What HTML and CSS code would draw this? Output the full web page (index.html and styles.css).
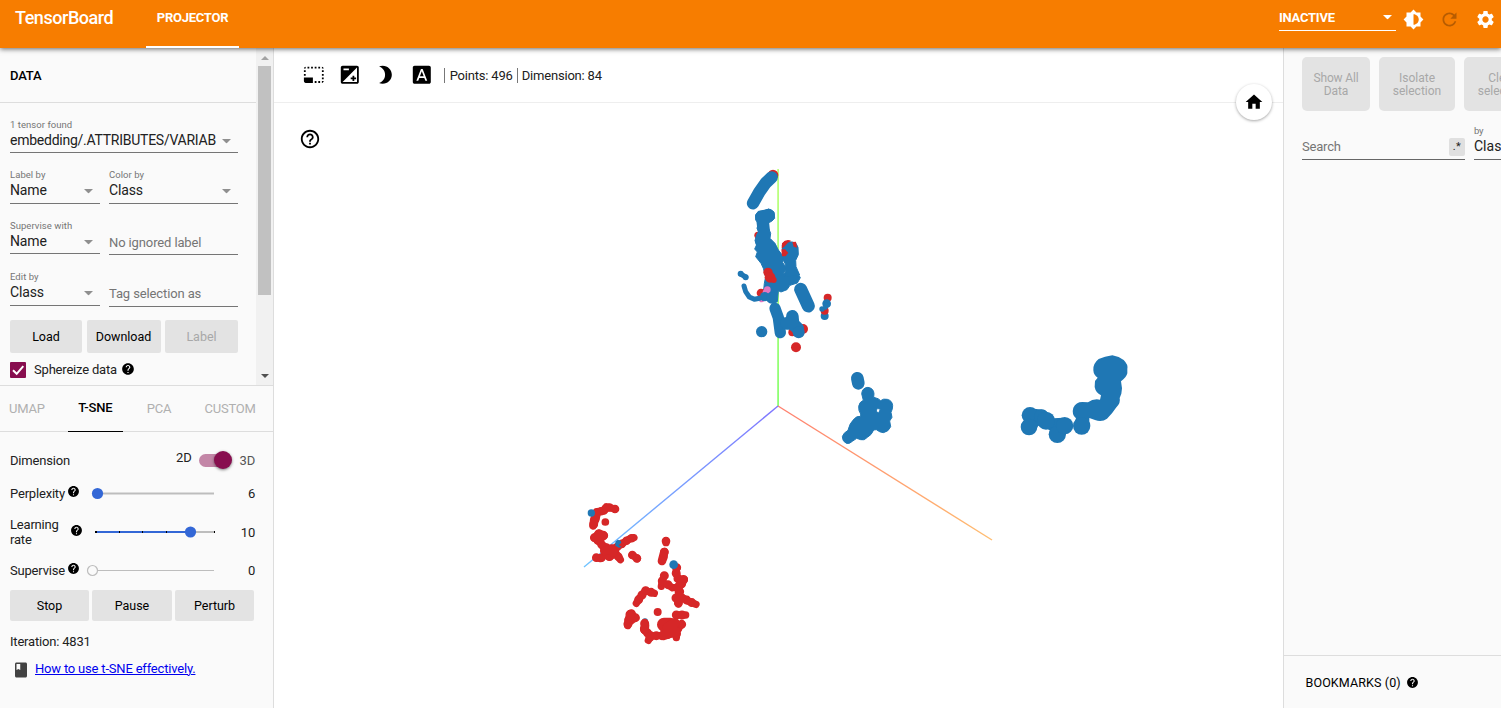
FILE: index.html
```html
<!DOCTYPE html>
<html lang="en">
<head>
<meta charset="utf-8">
<title>TensorBoard</title>
<link rel="stylesheet" href="styles.css">
</head>
<body>
<svg class="defs" width="0" height="0">
  <symbol id="help" viewBox="0 0 24 24"><path d="M12 2C6.48 2 2 6.48 2 12s4.48 10 10 10 10-4.48 10-10S17.52 2 12 2zm1 17h-2v-2h2v2zm2.07-7.75l-.9.92C13.45 12.9 13 13.5 13 15h-2v-.5c0-1.1.45-2.1 1.17-2.83l1.24-1.26c.37-.36.59-.86.59-1.41 0-1.1-.9-2-2-2s-2 .9-2 2H8c0-2.21 1.79-4 4-4s4 1.79 4 4c0 .88-.36 1.68-.93 2.25z"/></symbol>
  <symbol id="caret" viewBox="0 0 10 5"><path d="M0 0h10L5 5z"/></symbol>
</svg>
<div class="app">
  <header class="topbar">
    <div class="brand">TensorBoard</div>
    <div class="tab-main">PROJECTOR</div>
    <div class="spacer"></div>
    <div class="inactive"><span>INACTIVE</span><svg class="caret"><use href="#caret"/></svg></div>
    <svg class="hicon" viewBox="0 0 24 24"><path d="M20 15.31L23.31 12 20 8.69V4h-4.69L12 .69 8.69 4H4v4.69L.69 12 4 15.31V20h4.69L12 23.31 15.31 20H20v-4.69zM12 18V6c3.31 0 6 2.69 6 6s-2.69 6-6 6z"/></svg>
    <svg class="hicon dim" viewBox="0 0 24 24"><path d="M17.65 6.35C16.2 4.9 14.21 4 12 4c-4.42 0-7.99 3.58-7.99 8s3.57 8 7.99 8c3.73 0 6.84-2.55 7.73-6h-2.08c-.82 2.33-3.04 4-5.65 4-3.31 0-6-2.69-6-6s2.69-6 6-6c1.66 0 3.14.69 4.22 1.78L13 11h7V4l-2.35 2.35z"/></svg>
    <svg class="hicon" viewBox="0 0 24 24"><path d="M19.14 12.94c.04-.3.06-.61.06-.94 0-.32-.02-.64-.07-.94l2.03-1.58c.18-.14.23-.41.12-.61l-1.92-3.32c-.12-.22-.37-.29-.59-.22l-2.39.96c-.5-.38-1.03-.7-1.62-.94l-.36-2.54c-.04-.24-.24-.41-.48-.41h-3.84c-.24 0-.43.17-.47.41l-.36 2.54c-.59.24-1.13.57-1.62.94l-2.39-.96c-.22-.08-.47 0-.59.22L2.74 8.87c-.12.21-.08.47.12.61l2.03 1.58c-.05.3-.09.63-.09.94s.02.64.07.94l-2.03 1.58c-.18.14-.23.41-.12.61l1.92 3.32c.12.22.37.29.59.22l2.39-.96c.5.38 1.03.7 1.62.94l.36 2.54c.05.24.24.41.48.41h3.84c.24 0 .44-.17.47-.41l.36-2.54c.59-.24 1.13-.56 1.62-.94l2.39.96c.22.08.47 0 .59-.22l1.92-3.32c.12-.22.07-.47-.12-.61l-2.01-1.58zM12 15.6c-1.98 0-3.6-1.62-3.6-3.6s1.62-3.6 3.6-3.6 3.6 1.62 3.6 3.6-1.62 3.6-3.6 3.6z"/></svg>
  </header>
  <div class="main">
    <aside class="left">
      <section class="data">
        <div class="data-body">
          <h2 class="title">DATA</h2>
          <div class="fields">
            <div class="field wide"><label>1 tensor found</label><div class="value path">embedding/.ATTRIBUTES/VARIAB<svg class="caret"><use href="#caret"/></svg></div></div>
            <div class="field tall"><label>Label by</label><div class="value">Name<svg class="caret"><use href="#caret"/></svg></div></div>
            <div class="field tall"><label>Color by</label><div class="value">Class<svg class="caret"><use href="#caret"/></svg></div></div>
            <div class="field"><label>Supervise with</label><div class="value">Name<svg class="caret"><use href="#caret"/></svg></div></div>
            <div class="field tall"><div class="hint">No ignored label</div></div>
            <div class="field tall"><label>Edit by</label><div class="value">Class<svg class="caret"><use href="#caret"/></svg></div></div>
            <div class="field taller"><div class="hint">Tag selection as</div></div>
          </div>
          <div class="buttons data-buttons"><div class="btn">Load</div><div class="btn">Download</div><div class="btn off">Label</div></div>
          <div class="sphere"><svg class="check" viewBox="0 0 16 16"><path d="M3 8.2l3.7 3.6 6.6-7.6"/></svg><span>Sphereize data</span><svg class="help"><use href="#help"/></svg></div>
        </div>
        <div class="scroll"><svg class="arrow up" viewBox="0 0 8 4"><path d="M0 4h8L4 0z"/></svg><div class="thumb"></div><svg class="arrow down" viewBox="0 0 8 4"><path d="M0 0h8L4 4z"/></svg></div>
      </section>
      <nav class="tabs"><span>UMAP</span><span class="on">T-SNE</span><span>PCA</span><span>CUSTOM</span></nav>
      <section class="tsne">
        <div class="row dimension"><span>Dimension</span><div class="spacer"></div><span class="two">2D</span><div class="toggle"></div><span class="three">3D</span></div>
        <div class="row perp"><span>Perplexity</span><svg class="help"><use href="#help"/></svg>
          <svg class="slider" viewBox="0 0 130 14"><path d="M6 7.5h118" stroke="#bdbdbd" stroke-width="2"/><circle cx="7.5" cy="7.5" r="5.6" fill="#3367d6"/></svg><span class="num">6</span></div>
        <div class="row learn"><span class="two-line">Learning<br>rate</span><svg class="help"><use href="#help"/></svg>
          <svg class="slider" viewBox="0 0 130 14"><path d="M5 7h120" stroke="#bdbdbd" stroke-width="2"/><path d="M5 7h96" stroke="#3367d6" stroke-width="2"/><path d="M5 7h2m22 0h1m22 0h1m23 0h1m47 0h1" stroke="#000" stroke-width="2"/><circle cx="100.5" cy="7" r="5.6" fill="#3367d6"/></svg><span class="num">10</span></div>
        <div class="row sup"><span>Supervise</span><svg class="help"><use href="#help"/></svg>
          <svg class="slider" viewBox="0 0 130 14"><path d="M8 7.5h116" stroke="#bdbdbd"/><circle cx="2.5" cy="7.5" r="5" fill="#fafafa" stroke="#bdbdbd" stroke-width="1.2"/></svg><span class="num">0</span></div>
        <div class="buttons run-buttons"><div class="btn">Stop</div><div class="btn">Pause</div><div class="btn">Perturb</div></div>
        <div class="iter">Iteration: 4831</div>
        <div class="howto"><svg viewBox="0 0 24 24"><path d="M18 2H6c-1.1 0-2 .9-2 2v16c0 1.1.9 2 2 2h12c1.1 0 2-.9 2-2V4c0-1.1-.9-2-2-2zM6 4h5v8l-2.5-1.5L6 12V4z"/></svg><a href="#">How to use t-SNE effectively.</a></div>
      </section>
    </aside>
    <main class="stage">
      <div class="tools">
        <svg viewBox="0 0 24 24"><path d="M23 15h-2v2h2v-2zm0-4h-2v2h2v-2zm0 8h-2v2c1 0 2-1 2-2zM15 3h-2v2h2V3zm8 4h-2v2h2V7zm-2-4v2h2c0-1-1-2-2-2zM3 21h8v-6H1v4c0 1.1.9 2 2 2zM3 7H1v2h2V7zm12 12h-2v2h2v-2zm4-16h-2v2h2V3zm0 16h-2v2h2v-2zM3 3C2 3 1 4 1 5h2V3zm0 8H1v2h2v-2zm8-8H9v2h2V3zM7 3H5v2h2V3z"/></svg>
        <svg viewBox="0 0 24 24"><path d="M15 17v2h2v-2h2v-2h-2v-2h-2v2h-2v2h2zm5-15H4c-1.1 0-2 .9-2 2v16c0 1.1.9 2 2 2h16c1.1 0 2-.9 2-2V4c0-1.1-.9-2-2-2zM5 5h6v2H5V5zm15 15H4L20 4v16z"/></svg>
        <svg viewBox="0 0 24 24"><path d="M8.5 2C7 2 5.700 2.300 4.500 2.800C8.700 4.300 11.200 7.700 11.200 12S8.700 19.700 4.500 21.200C5.700 21.700 7 22 8.500 22C14.300 22 18.700 17.500 18.700 12S14.300 2 8.500 2z"/></svg>
        <svg viewBox="0 0 24 24"><path d="M9.93 13.5h4.14L12 7.98zM20 2H4c-1.1 0-2 .9-2 2v16c0 1.1.9 2 2 2h16c1.1 0 2-.9 2-2V4c0-1.1-.9-2-2-2zm-4.05 16.5l-1.14-3H9.17l-1.12 3H5.96l5.11-13h1.86l5.11 13h-2.09z"/></svg>
        <span class="stat">Points: 496</span><span class="stat">Dimension: 84</span>
      </div>
      <svg class="plot" viewBox="274 103 1009 605">
        <defs>
          <linearGradient id="gy" x1="0" y1="0" x2="0" y2="1"><stop offset="0" stop-color="#c0ff80"/><stop offset="1" stop-color="#8bff73"/></linearGradient>
          <linearGradient id="gx" gradientUnits="userSpaceOnUse" x1="778" y1="406" x2="992" y2="540"><stop offset="0" stop-color="#ff7f6e"/><stop offset="1" stop-color="#ffbd70"/></linearGradient>
          <linearGradient id="gz" gradientUnits="userSpaceOnUse" x1="778" y1="406" x2="584" y2="567"><stop offset="0" stop-color="#8075ff"/><stop offset="1" stop-color="#70c4ff"/></linearGradient>
          <path id="trail-a" d="M120 57L94 50L88 63L65 65L60 90L54 108M58 143L73 129L88 137L65 148L82 166L102 177L122 174L150 155L165 146L177 143M64 203L77 206L100 182L102 201L123 190L136 209M118 190L94 190L82 166M172 195L187 206M273 153V158M268 186L267 197L261 213"/>
          <path id="trail-b" d="M305 233L303 248L309 266L328 269L313 292L292 293M310 290L313 310M268 257L262 272L259 289M279 284L292 293M303 324H325L341 334L363 343M314 305L310 342M212 302L238 310M212 302L196 321L184 340M169 371L182 384L160 394L158 407M165 373L160 394M209 400L208 421L227 437L220 451M227 437H265L299 428M304 375H332M320 403L305 420L304 443"/>
        </defs>
        <rect x="777.2" y="169" width="1.8" height="237" fill="url(#gy)"/>
        <path d="M778 406L992 540" stroke="url(#gx)" stroke-width="1.4"/>
        <path d="M778 406L584 567" stroke="url(#gz)" stroke-width="1.4"/>
        <!-- upper cluster -->
        <g transform="translate(725 160) scale(.33333)">
          <g class="r"><circle cx="144" cy="45" r="16"/><circle cx="99" cy="226" r="11"/></g>
          <path class="bl" stroke-width="37" d="M140 52L122 69L103 96L84 130"/>
          <path class="bl" stroke-width="37" d="M109 170L131 165M113 185L116 210M112 229L109 245L118 268L132 288"/>
          <g class="b grown">
            <path d="M92 165L100 154L118 152L131 147L147 156L149 175L140 184L131 188L131 205L137 220L135 235L150 250L160 270L168 280L178 292L172 306L184 324L176 340L215 335L226 353L217 369L195 376L186 389L168 396L160 392L157 425L145 432L130 420L116 390L118 370L122 350L115 325L108 310L92 290L97 276L89 267L95 254L90 242L94 228L101 215L96 205L100 190L92 180z"/>
            <path d="M172 256L177 246L202 246L213 250L219 262L220 284L212 301L213 320L224 345L180 350L181 312L174 300z"/>
          </g>
          <g class="r"><path d="M170 266L171 250Q184 235 199 243Q188 246 180 258zM202 246L213 245L216 263L206 260zM169 268H180L190 278L182 289L171 289z"/><circle cx="129" cy="337" r="14"/><circle cx="135" cy="352" r="16"/><circle cx="146" cy="360" r="9"/><circle cx="108" cy="399" r="13"/></g>
          <g class="p"><circle cx="127" cy="389" r="10"/><circle cx="122" cy="397" r="9"/><circle cx="110" cy="419" r="8"/></g>
          <g class="b"><circle cx="119" cy="410" r="14"/><circle cx="140" cy="414" r="17"/><circle cx="110" cy="515" r="17"/></g>
          <path class="bl" stroke-width="15" d="M47 342L62 351"/><circle class="b" cx="47" cy="341" r="9"/><circle class="b" cx="62" cy="352" r="9"/>
          <path class="bl" stroke-width="15" d="M57 378L62 395L73 411L88 418L104 415"/>
          <path class="bl" stroke-width="39" d="M227 388L238 412L250 438"/>
          <path class="bl" stroke-width="34" d="M150 445L160 473L166 518M168 490H195"/>
          <g class="r"><circle cx="234" cy="507" r="15"/><circle cx="202" cy="517" r="12"/><circle cx="213" cy="562" r="15"/></g>
          <path class="bl" stroke-width="38" d="M202 469L204 492L218 505M185 490H205"/>
          <circle class="b" cx="221" cy="517" r="18"/>
          <circle class="b" cx="299" cy="468" r="12"/><circle class="r" cx="299" cy="452" r="12"/><circle class="b" cx="291" cy="447" r="8"/><circle class="r" cx="308" cy="413" r="12"/><circle class="b" cx="305" cy="431" r="13"/>
          <path class="bl" stroke-width="14" d="M304 434L301 442"/>
        </g>
        <!-- lower left clusters -->
        <g transform="translate(575 490) scale(.33333)">
          <circle class="b" cx="210" cy="394" r="9"/>
          <use href="#trail-a" class="rl" stroke-width="22"/><use href="#trail-a" class="rl beads" stroke-width="26"/>
          <use href="#trail-b" class="rl" stroke-width="22"/><use href="#trail-b" class="rl beads" stroke-width="27"/>
          <path class="rl" stroke-width="26" d="M60 143L75 134L86 137L68 150M88 183L110 178L115 188M58 88L56 104M65 70L60 90M166 374L160 400M210 405L209 420M268 186L261 213"/>
          <path class="rl" stroke-width="42" d="M267 404L286 404L276 417"/><path class="rl" stroke-width="28" d="M277 412L300 398M265 437L303 424"/>
          <g class="r"><circle cx="248" cy="366" r="12"/><circle cx="91" cy="96" r="11.5"/></g>
          <g class="b"><circle cx="49" cy="69" r="11"/><circle cx="296" cy="224" r="13"/><path d="M121 155L128 149L137 152L139 158L131 166L140 171L131 173L121 167z"/></g>
        </g>
        <!-- middle cluster -->
        <g class="b" transform="translate(830 360) scale(.33333)">
          <path class="bl" stroke-width="38" d="M82 55L85 70"/>
          <path class="grown" fill-rule="evenodd" d="M95 101Q97 83 114 82Q131 85 132 101L131 112L144 116L152 122Q160 115 172 118Q187 122 188 137Q188 148 183 157L186 172L179 183L182 200Q176 215 160 218Q149 217 139 209L131 210Q125 225 112 232Q103 243 92 239L80 235L67 244Q58 253 49 250Q37 244 37 230Q40 219 54 211Q58 190 73 176Q80 168 92 169L92 162Q85 153 86 139Q88 126 100 121zM142 145L138 154L146 159L151 148z"/>
        </g>
        <!-- right cluster -->
        <g class="b" transform="translate(1010 345) scale(.33333)">
          <path d="M250 76Q248 56 266 42Q284 35 307 31Q328 35 341 45Q355 59 352 72V85Q349 98 333 109L336 130L334 146L329 159Q333 174 318 188L306 205L291 221Q276 232 255 225L238 219V245L192 238L198 220Q184 208 190 188Q198 171 217 171L234 172Q250 160 270 164L273 151Q257 143 254 126L255 108L263 98Q251 91 250 76z"/>
          <path d="M60 190L105 195L130 220L160 218L164 266L130 262L108 250L85 242L75 258L45 226z"/>
          <circle cx="60" cy="211" r="25"/><circle cx="57" cy="246" r="25"/><circle cx="94" cy="215" r="22"/><circle cx="108" cy="227" r="27"/><circle cx="142" cy="268" r="26"/><circle cx="164" cy="242" r="26"/><circle cx="215" cy="243" r="26"/>
        </g>
      </svg>
      <svg class="ask" viewBox="0 0 24 24"><path d="M11 18h2v-2h-2v2zm1-16C6.48 2 2 6.48 2 12s4.48 10 10 10 10-4.48 10-10S17.52 2 12 2zm0 18c-4.41 0-8-3.59-8-8s3.59-8 8-8 8 3.59 8 8-3.59 8-8 8zm0-14c-2.21 0-4 1.79-4 4h2c0-1.1.9-2 2-2s2 .9 2 2c0 2-3 1.75-3 5h2c0-2.25 3-2.5 3-5 0-2.21-1.79-4-4-4z"/></svg>
      <div class="home"><svg viewBox="0 0 24 24"><path d="M10 20v-6h4v6h5v-8h3L12 3 2 12h3v8z"/></svg></div>
    </main>
    <aside class="right">
      <div class="actions"><div class="big">Show All<br>Data</div><div class="big mid">Isolate<br>selection</div><div class="big mid">Clear<br>selection</div></div>
      <div class="search"><div class="query"><span>Search</span><b>.*</b></div><div class="by"><label>by</label><div>Class</div></div></div>
      <div class="spacer"></div>
      <div class="bookmarks">BOOKMARKS (0)<svg class="help"><use href="#help"/></svg></div>
    </aside>
  </div>
</div>
</body>
</html>
```
FILE: styles.css
```css
* { box-sizing: border-box; }
body { margin: 0; font-family: Roboto, sans-serif; font-size: 13px; letter-spacing: -.19px; color: #212121; overflow: hidden; }
svg { display: block; flex: none; }
.defs { position: absolute; }
.app { width: 1501px; height: 708px; display: flex; flex-direction: column; overflow: hidden; }
.spacer { flex: 1; }
.topbar { height: 48px; flex: none; background: #f77d00; color: #fff; display: flex; box-shadow: 0 1px 5px rgba(0,0,0,.6); position: relative; z-index: 2; padding-left: 15px; }
.brand { width: 131px; font-size: 18px; font-weight: 500; line-height: 36px; letter-spacing: -.45px; }
.tab-main { width: 93px; text-align: center; font-size: 13px; font-weight: 700; line-height: 35px; border-bottom: 2px solid #fff; letter-spacing: -.25px; }
.inactive { width: 117px; height: 31px; border-bottom: 1px solid #fff; display: flex; align-items: center; justify-content: space-between; padding: 5px 4px 0 0; font-weight: 700; letter-spacing: -.25px; margin-right: 7px; }
.caret { width: 9px; height: 4.5px; fill: currentColor; }
.hicon { width: 21px; height: 21px; margin: 9px 15px 0 0; fill: #fff; }
.hicon:last-child { margin-right: 5px; }
.hicon.dim { fill: #b75c00; }
.main { flex: 1; display: flex; min-height: 0; }
.left { width: 274px; flex: none; background: #fafafa; border-right: 1px solid #ddd; display: flex; flex-direction: column; }
.data { height: 338px; display: flex; border-bottom: 1px solid #ddd; }
.data-body { width: 256px; }
.title { margin: 0; height: 55px; border-bottom: 1px solid #ddd; padding-left: 10px; line-height: 56px; font-size: 13px; font-weight: 500; color: #000; }
.fields { margin: 16px 18px 0 10px; display: grid; grid-template-columns: 90px 129px; column-gap: 9px; row-gap: 16px; }
.field { height: 34px; border-bottom: 1px solid #757575; }
.field.tall { height: 35px; }
.field.taller { height: 36px; }
.field.wide { grid-column: 1 / 3; }
.field label { display: block; font-size: 9.5px; line-height: 12px; color: #757575; letter-spacing: .05px; }
.value { font-size: 14px; line-height: 18px; display: flex; align-items: center; justify-content: space-between; padding-right: 7px; letter-spacing: -.15px; }
.value.path { letter-spacing: -.25px; }
.value .caret { fill: #8f8f8f; margin-top: 3px; }
.hint { font-size: 13px; line-height: 18px; padding-top: 14px; color: #757575; letter-spacing: -.12px; }
.buttons { display: flex; }
.btn { background: #e3e3e3; border-radius: 2px; text-align: center; color: #000; font-size: 12.5px; letter-spacing: 0; }
.btn.off { color: #a8a8a8; }
.data-buttons { margin: 13px 0 0 10px; gap: 4.5px; }
.data-buttons .btn { height: 33px; line-height: 33px; width: 73px; }
.data-buttons .btn:first-child { width: 72px; }
.data-buttons .btn:nth-child(2) { width: 74px; }
.help { width: 14px; height: 14px; fill: #000; }
.sphere { display: flex; align-items: center; margin: 9px 0 0 10px; height: 16px; }
.sphere span { margin-top: -2px; }
.check { width: 16px; height: 16px; background: #880e4f; border-radius: 1px; fill: none; stroke: #fff; stroke-width: 2; margin-right: 8px; }
.sphere .help { margin: -2px 0 0 4px; }
.scroll { width: 17px; background: #f1f1f1; display: flex; flex-direction: column; align-items: center; justify-content: space-between; }
.thumb { width: 13px; height: 229px; background: #c1c1c1; margin-bottom: auto; }
.arrow { width: 8px; height: 4px; }
.arrow.up { margin: 8px 0 6px; fill: #a3a3a3; }
.arrow.down { margin-bottom: 7px; fill: #505050; }
.tabs { height: 46px; flex: none; border-bottom: 1px solid #ddd; display: flex; line-height: 45px; color: #b0b0b0; padding-left: 9px; }
.tabs span { margin-right: 24px; }
.tabs span:first-child { margin-right: 23px; }
.tabs span:last-child { margin: 0 0 0 9px; }
.tabs .on { width: 55px; text-align: center; color: #000; font-weight: 500; height: 46px; border-bottom: 1px solid #000; line-height: 44px; }
.tsne { padding: 0 18px 0 10px; }
.row { display: flex; align-items: center; }
.row .help { width: 13px; height: 13px; }
.slider { width: 130px; height: 14px; overflow: visible; }
.num { margin-left: auto; }
.dimension { height: 22px; margin-top: 17px; }
.two { margin: -6px 7px 0 0; }
.toggle { width: 31px; height: 13px; border-radius: 7px; background: #c386a7; position: relative; margin-right: 10px; }
.toggle::after { content: ""; position: absolute; right: -2px; top: -3px; width: 18px; height: 18px; border-radius: 50%; background: #880e4f; box-shadow: 0 1px 3px rgba(0,0,0,.5); }
.three { color: #555; }
.perp, .sup { height: 20px; }
.perp { margin-top: 12px; }
.row span:first-child { width: 57px; white-space: nowrap; }
.perp .slider, .sup .slider { margin-left: 10px; }
.perp .help, .sup .help { margin-top: -3px; }
.learn { height: 30px; margin-top: 14px; }
.row span.two-line { line-height: 15px; width: 60px; }
.learn .help { margin: -4px 7px 0 0; }
.sup { margin-top: 13px; }
.run-buttons { margin-top: 10px; gap: 3px; }
.run-buttons .btn { height: 31px; line-height: 31px; width: 80px; flex: none; letter-spacing: -.05px; }
.run-buttons .btn:first-child, .run-buttons .btn:last-child { width: 79px; }
.iter { margin-top: 12px; line-height: 18px; }
.howto { display: flex; align-items: center; margin-top: 8px; height: 18px; }
.howto svg { width: 18px; height: 18px; fill: #424242; margin: 3px 5px 0 2px; }
.howto a { color: #00e; letter-spacing: -.19px; }
.stage { width: 1009px; flex: none; position: relative; background: #fff; }
.tools { height: 55px; border-bottom: 1px solid #eee; display: flex; align-items: center; padding-left: 28.7px; }
.tools svg { width: 21.6px; height: 21.6px; margin-right: 14.4px; }
.stat { border-left: 1px solid #777; line-height: 15px; padding: 0 4px; }
.tools .stat:nth-of-type(1) { margin-left: -3px; padding-left: 5px; }
.plot { width: 1009px; height: 605px; }
.b { fill: #1f77b4; } .r { fill: #d62728; } .p { fill: #e377c2; }
.bl, .rl { fill: none; stroke-linecap: round; stroke-linejoin: round; }
.bl { stroke: #1f77b4; } .rl { stroke: #d62728; }
.beads { stroke-dasharray: 0 17; }
.grown { stroke: #1f77b4; stroke-width: 3; stroke-linejoin: round; }
.ask { position: absolute; left: 25px; top: 80px; width: 22px; height: 22px; }
.home { position: absolute; left: 962px; top: 36px; width: 36px; height: 36px; border-radius: 50%; background: #fff; box-shadow: 0 1px 3px rgba(0,0,0,.35); padding: 8px; }
.home svg { width: 20px; height: 20px; }
.right { flex: 1; background: #fafafa; border-left: 1px solid #ddd; display: flex; flex-direction: column; overflow: hidden; min-width: 0; }
.actions { display: flex; margin: 9px 0 0 18px; gap: 9px; }
.big { width: 68px; height: 54px; flex: none; border-radius: 5px; background: #e3e3e3; color: #a8a8a8; text-align: center; font-size: 12px; line-height: 13px; padding-top: 15px; letter-spacing: -.15px; }
.big.mid { width: 76px; letter-spacing: 0; }
.search { display: flex; margin: 14px 0 0 18px; gap: 9px; }
.query { width: 163px; flex: none; height: 35px; border-bottom: 1px solid #666; display: flex; align-items: flex-end; justify-content: space-between; color: #757575; line-height: 25px; }
.query b { width: 16px; height: 18px; border-radius: 2px; background: #e0e0e0; color: #222; font-size: 11px; line-height: 18px; text-align: center; font-weight: 400; margin-bottom: 3px; letter-spacing: .5px; }
.by { width: 60px; flex: none; height: 35px; border-bottom: 1px solid #666; }
.by label { display: block; font-size: 9.5px; line-height: 12px; color: #757575; }
.by div { font-size: 14px; line-height: 19px; letter-spacing: 0; }
.bookmarks { height: 53px; border-top: 1px solid #ddd; display: flex; align-items: center; padding-left: 21.5px; font-size: 12.5px; letter-spacing: .12px; color: #000; }
.bookmarks .help { width: 13px; height: 13px; margin-left: 5px; }
```
